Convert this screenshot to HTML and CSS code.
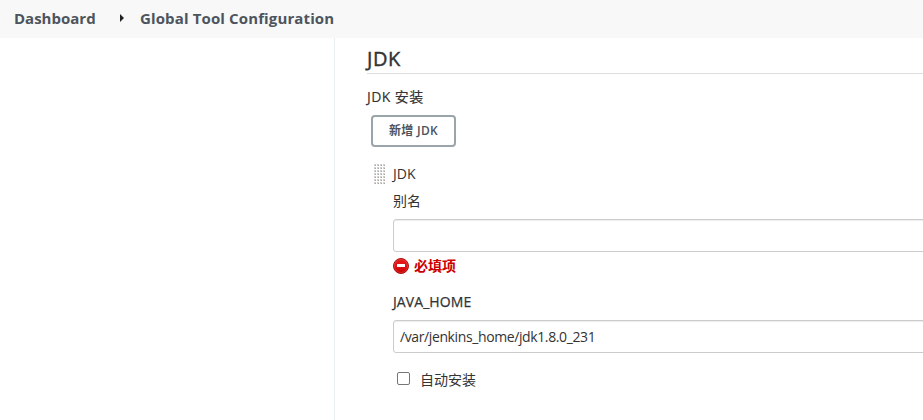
FILE: index.html
```html
<!DOCTYPE html>
<html lang="zh-CN">
<head>
<meta charset="utf-8">
<title>Global Tool Configuration</title>
<link rel="stylesheet" href="styles.css">
</head>
<body>
<header class="breadcrumbs">
  <a class="crumb crumb-home">Dashboard</a>
  <svg class="arrow" width="4" height="8" viewBox="0 0 4 8"><path d="M0 0L4 4L0 8Z" fill="#222"/></svg>
  <a class="crumb crumb-page">Global Tool Configuration</a>
</header>
<div class="page">
  <aside class="side"></aside>
  <main class="main">
    <h2 class="section-title"><span>JDK</span></h2>
    <div class="label install-label">JDK 安装</div>
    <button class="add" type="button">新增 JDK</button>
    <div class="item">
      <svg class="grip" width="11" height="21">
        <defs>
          <pattern id="dots" width="3" height="3" patternUnits="userSpaceOnUse">
            <rect width="2" height="2" fill="#d2d0cc"/>
            <rect x="1" y="1" width="1" height="1" fill="#aaa8a4"/>
          </pattern>
        </defs>
        <rect width="11" height="21" fill="url(#dots)"/>
      </svg>
      <div class="fields">
        <div class="item-name">JDK</div>
        <label class="label alias" for="name">别名</label>
        <input class="text" id="name" type="text">
        <div class="error">
          <svg width="16" height="16" viewBox="0 0 16 16">
            <defs><linearGradient id="red" x2="0" y2="1"><stop stop-color="#e11b1b"/><stop offset=".5" stop-color="#e21016"/><stop offset="1" stop-color="#c40000"/></linearGradient></defs>
            <circle cx="8" cy="8" r="7.5" fill="url(#red)" stroke="#b01010"/>
            <circle cx="8" cy="8" r="6.5" fill="none" stroke="#ee6b6b" stroke-opacity=".5" stroke-width=".7"/>
            <rect x="4" y="6" width="8" height="3" fill="#fff"/>
          </svg>
          <span>必填项</span>
        </div>
        <label class="label home" for="home">JAVA_HOME</label>
        <input class="text home-value" id="home" type="text" value="/var/jenkins_home/jdk1.8.0_231">
        <label class="auto"><input class="check" type="checkbox"><span>自动安装</span></label>
      </div>
    </div>
  </main>
</div>
</body>
</html>
```
FILE: styles.css
```css
* { box-sizing: border-box; }
body {
  margin: 0;
  height: 420px;
  overflow: hidden;
  background: #fff;
  color: #333;
  font: 14px/20px "Open Sans", "Noto Sans CJK SC", sans-serif;
}
.breadcrumbs {
  display: flex;
  align-items: center;
  height: 38px;
  padding: 0 0 2px 14px;
  background: #f8f8f8;
  color: #4d545d;
  font-size: 15px;
  font-weight: 700;
  white-space: nowrap;
}
.crumb-home { width: 106px; }
.crumb-page { letter-spacing: .13px; }
.arrow { width: 4px; margin-right: 16px; }
.page { display: flex; height: 382px; }
.side { flex: none; width: 335px; border-right: 1px solid #eaeff2; }
.main { flex: 1; min-width: 0; padding-left: 32px; }
.section-title {
  height: 36px;
  margin: 0;
  padding-top: 6px;
  border-bottom: 1px solid #dedede;
  font-size: 20px;
  line-height: 30px;
  font-weight: 400;
  letter-spacing: .6px;
  -webkit-text-stroke: .4px #333;
}
.label { display: block; }
.install-label { margin-top: 13px; letter-spacing: .4px; -webkit-text-stroke: .15px #333; }
.add {
  display: block;
  width: 85px;
  height: 32px;
  margin: 8px 0 0 4px;
  padding: 0;
  border: 2px solid #9aa5ab;
  border-radius: 4px;
  background: #fff;
  color: #4d545d;
  font: 600 12px/28px "Open Sans", "Noto Sans CJK SC", sans-serif;
  letter-spacing: .3px;
}
.item { display: flex; margin-top: 17px; padding-left: 7px; }
.grip { flex: none; margin-right: 8px; }
.fields { flex: 1; min-width: 0; }
.item-name { line-height: 20px; }
.alias { margin-top: 7px; }
.text {
  display: block;
  width: 560px;
  height: 33px;
  margin-top: 8px;
  padding: 0 6px;
  border: 1px solid #ccc;
  border-radius: 3px;
  box-shadow: inset 0 1px 1px rgba(0, 0, 0, .075);
  background: #fff;
  color: #333;
  font: inherit;
}
.home-value { letter-spacing: -.39px; }
.error {
  display: flex;
  align-items: center;
  gap: 5px;
  height: 16px;
  margin-top: 6px;
  color: #c00;
  font-weight: 700;
}
.home { margin-top: 18px; letter-spacing: .08px; -webkit-text-stroke: .25px #333; }
.auto { display: flex; align-items: center; height: 20px; margin-top: 17px; }
.check {
  appearance: none;
  width: 13px;
  height: 13px;
  margin: 0 10px 3px 4px;
  border: 1px solid #767676;
  border-radius: 2px;
  background: #fff;
}
```
